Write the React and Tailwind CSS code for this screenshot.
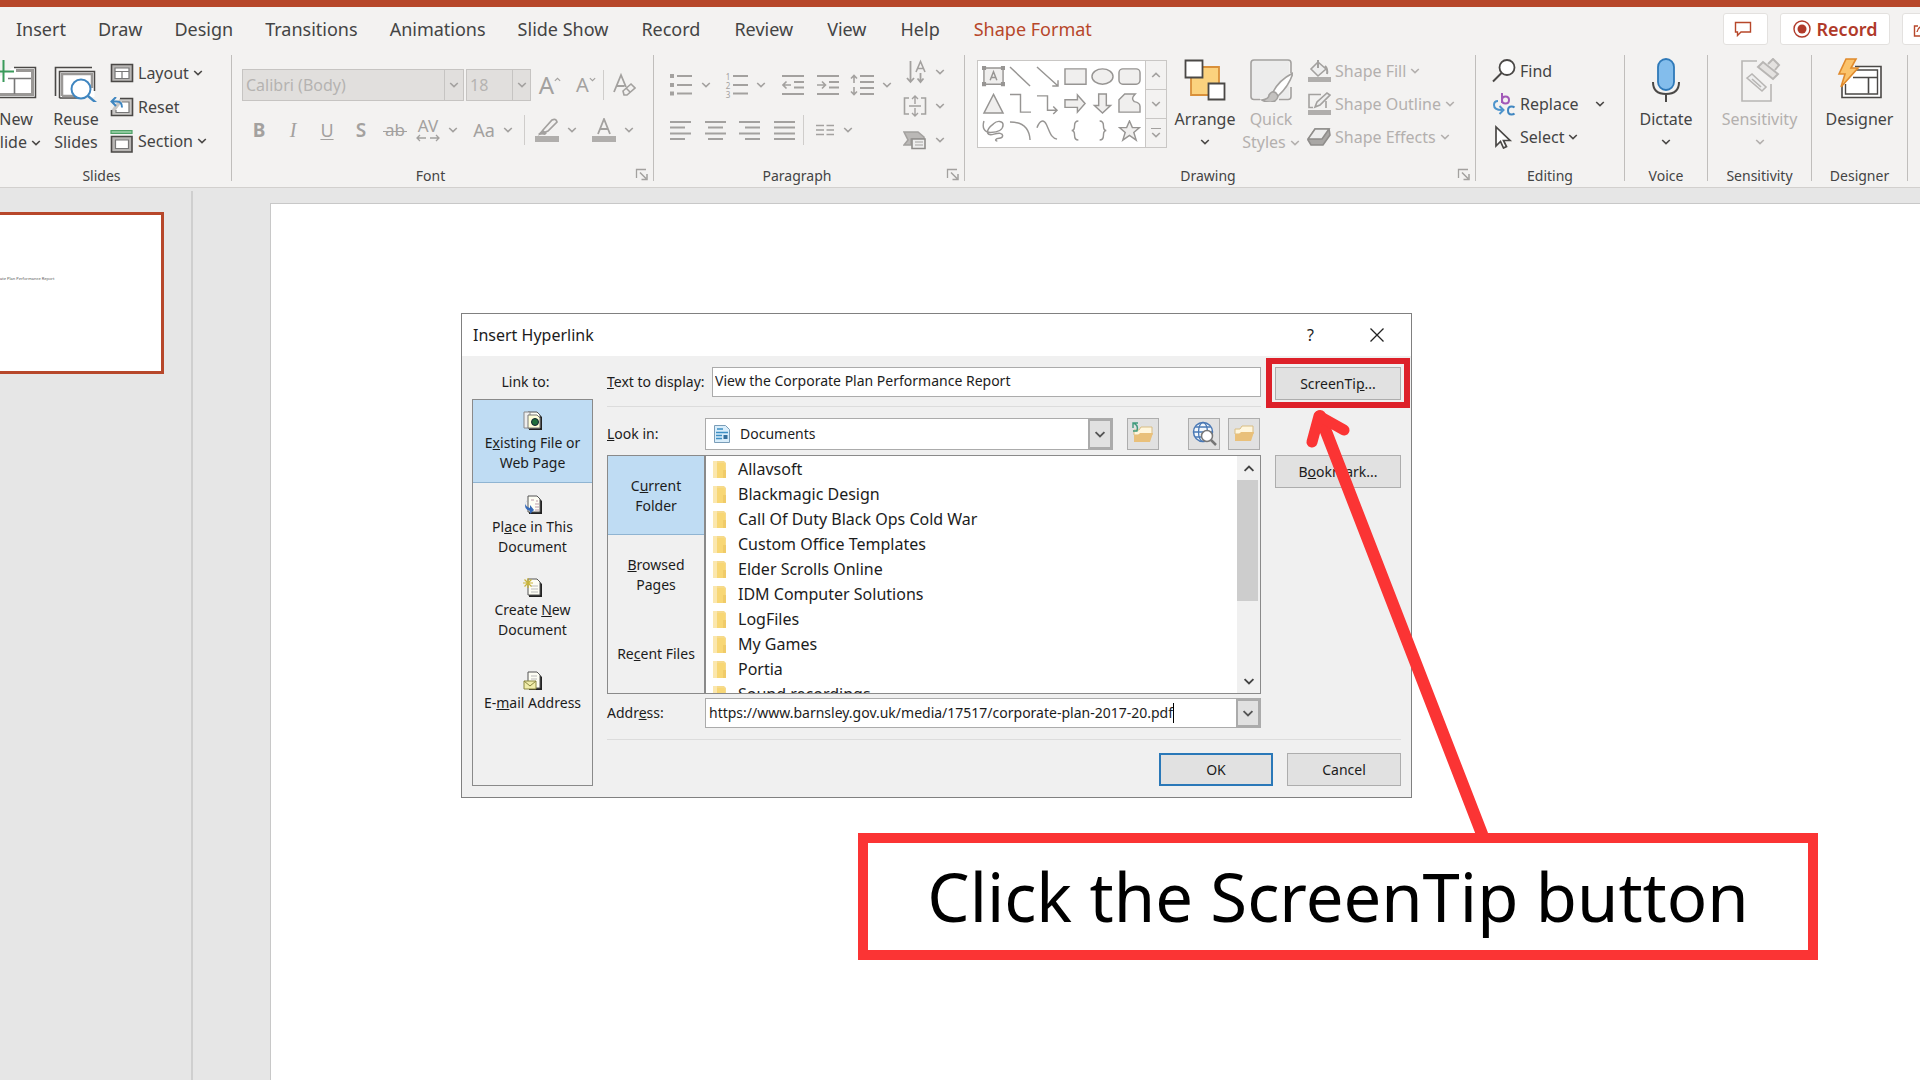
import React from "react";

const GREY = "#a3a19f";
const DARK = "#4a4846";

function Svg({ w, h, children, className = "" }) {
  return (
    <svg
      width={w}
      height={h}
      viewBox={`0 0 ${w} ${h}`}
      fill="none"
      strokeWidth="1.6"
      className={`shrink-0 ${className}`}
      aria-hidden="true"
    >
      {children}
    </svg>
  );
}

function Chevron({ color = DARK, w = 10, h = 6, className = "" }) {
  return (
    <svg width={w} height={h} viewBox="0 0 10 6" fill="none" className={`shrink-0 ${className}`} aria-hidden="true">
      <path d="M1.2 1 5 4.6 8.8 1" stroke={color} strokeWidth="1.6" />
    </svg>
  );
}

/* ---------- ribbon scaffolding ---------- */

function Launcher() {
  return (
    <button type="button" aria-label="More options" className="absolute right-1 bottom-0">
      <Svg w={14} h={14}>
        <path d="M1.5 11V2.5H11" stroke={GREY} strokeWidth="1.3" />
        <path d="M5 5.500 11 11.500M12 7v5.500H6.500" stroke={GREY} strokeWidth="1.5" />
      </Svg>
    </button>
  );
}

function Group({ label, width, launcher, children }) {
  return (
    <section className={`relative flex h-[126px] shrink-0 flex-col border-r border-[#c0bebc] ${width}`}>
      <div className="flex flex-1 items-start pt-px">{children}</div>
      <div className={`h-4 text-center text-[14px] leading-[22px] text-[#444] ${launcher ? "pr-6" : ""}`}>{label}</div>
      {launcher && <Launcher />}
    </section>
  );
}

function BigButton({ icon, lines, chevron, className = "", disabled }) {
  const color = disabled ? "#b3b0ae" : DARK;
  return (
    <button
      type="button"
      disabled={disabled}
      className={`flex shrink-0 flex-col items-center text-[16px] leading-[23px] ${
        disabled ? "text-[#b3b0ae]" : "text-[#444]"
      } ${className}`}
    >
      <span className="mb-1 flex h-12 items-center justify-center">{icon}</span>
      {lines.map((line, i) => (
        <span key={line} className="flex items-center gap-1 whitespace-nowrap">
          {line}
          {chevron === "inline" && i === lines.length - 1 && <Chevron color={color} />}
        </span>
      ))}
      {chevron === "below" && <Chevron color={color} className="mt-2" />}
    </button>
  );
}

function SmallButton({ icon, label, chevron, gap = "gap-1", disabled, className = "" }) {
  const color = disabled ? "#b3b0ae" : DARK;
  return (
    <button
      type="button"
      disabled={disabled}
      className={`flex items-center whitespace-nowrap text-[16px] ${
        disabled ? "text-[#b3b0ae]" : "text-[#444]"
      } ${className}`}
    >
      <span className="mr-1 flex w-6 justify-center">{icon}</span>
      <span className={`flex items-center ${gap}`}>
        {label}
        {chevron && <Chevron color={color} />}
      </span>
    </button>
  );
}

function Tool({ label, width, chevron, children }) {
  return (
    <button
      type="button"
      disabled
      aria-label={label}
      className={`flex h-8 shrink-0 items-center justify-center gap-2 text-[#a3a19f] ${width}`}
    >
      {children}
      {chevron && <Chevron color={GREY} />}
    </button>
  );
}

/* ---------- icons ---------- */

const IconNewSlide = () => (
  <Svg w={44} h={44}>
    <path d="M18 10h24v29H4V20" fill="#fff" />
    <path d="M20 9.500h21.500v30H4V20" stroke={DARK} strokeWidth="1.5" />
    <path d="M22 12.500h16.500v24H6" stroke="#9a9896" strokeWidth="3" />
    <path d="M14 20.500h23M20.500 21v15" stroke="#777" />
    <path d="M9.500 2v22M0 13.500h20" stroke="#3a9a5b" strokeWidth="2" />
  </Svg>
);
const IconReuse = () => (
  <Svg w={44} h={44}>
    <path d="M6.500 14h34v25h-34z" fill="#fff" />
    <path d="M1.500 38V9.500H38" stroke={DARK} />
    <path d="M5.500 40V13.500h35V33M5.500 40H24" stroke={DARK} strokeWidth="1.5" />
    <path d="M8 38V16h30v14M8 38h12" stroke="#9a9896" strokeWidth="2.500" />
    <circle cx="27" cy="31" r="9.500" fill="#fff" stroke="#3f86c0" strokeWidth="2" />
    <path d="m34 38 9.500 8" stroke="#3f86c0" strokeWidth="2.400" />
  </Svg>
);
const IconLayout = () => (
  <Svg w={24} h={20}>
    <path d="M1.500 1.500h21v17h-21z" fill="#b8b6b4" stroke={DARK} />
    <path d="M5 5h14v10.500H5z" fill="#fff" stroke="#777" strokeWidth="1.200" />
    <path d="M5 8.500h14M12 8.500v7" stroke="#777" strokeWidth="1.200" />
  </Svg>
);
const IconReset = () => (
  <Svg w={24} h={20}>
    <path d="M10 1.500h12.500v17h-21V13" fill="#c9c7c5" stroke={DARK} />
    <path d="M12 5h7v10.500H6V13" fill="#fff" stroke="#777" strokeWidth="1.200" />
    <path d="M6 0 1.500 4.500 6 9M2 4.500h5q5 0 5 6" stroke="#3f86c0" strokeWidth="2" />
  </Svg>
);
const IconSection = () => (
  <Svg w={24} h={24}>
    <path d="M1 1.500h21v3H1z" fill="#8cc79b" stroke="#4fa167" strokeWidth="1.200" />
    <path d="M1.500 7.500h20.500v15.500H1.500z" fill="#b8b6b4" stroke={DARK} />
    <path d="M5.500 11h13v8.500h-13z" fill="#fff" stroke="#777" strokeWidth="1.200" />
  </Svg>
);
const IconBullets = () => (
  <Svg w={24} h={24} className="shrink-0">
    <path d="M1 3h4M1 12h4M1 20.500h4" stroke={GREY} strokeWidth="4" />
    <path d="M8 3h15M8 12h15M8 20.500h15" stroke={GREY} strokeWidth="1.800" />
  </Svg>
);
const IconNumbers = () => (
  <span className="flex items-center gap-[3px]">
    <span className="flex flex-col text-[8px] leading-[9px]">
      <span>1</span>
      <span>2</span>
      <span>3</span>
    </span>
    <Svg w={15} h={24}>
      <path d="M0 3h15M0 12h15M0 20.500h15" stroke={GREY} strokeWidth="1.800" />
    </Svg>
  </span>
);
const IconIndent = ({ right }) => (
  <Svg w={22} h={22}>
    <path d="M0 2h22M12 8h10M12 13.500h10M0 20h22" stroke={GREY} strokeWidth="1.800" />
    {right ? (
      <path d="M0 11h8M5 7.500 8.500 11 5 14.500" stroke={GREY} />
    ) : (
      <path d="M9 11H1M4.500 7.500 1 11l3.500 3.500" stroke={GREY} />
    )}
  </Svg>
);
const IconSpacing = () => (
  <Svg w={24} h={22}>
    <path d="M10 2h14M10 8h14M10 14h14M10 20h14" stroke={GREY} strokeWidth="1.800" />
    <path d="M4 9V1.500M1 4.500l3-3 3 3M4 13v7.500M1 17.500l3 3 3-3" stroke={GREY} />
  </Svg>
);
const alignRows = {
  left: ["M0 2h21", "M0 7.500h15", "M0 13.500h21", "M0 19h15"],
  center: ["M0 2h21", "M3 7.500h15", "M0 13.500h21", "M3 19h15"],
  right: ["M0 2h21", "M6 7.500h15", "M0 13.500h21", "M6 19h15"],
  justify: ["M0 2h21", "M0 7.500h21", "M0 13.500h21", "M0 19h21"],
};
const IconAlign = ({ kind }) => (
  <Svg w={21} h={21}>
    <path d={alignRows[kind].join("")} stroke={GREY} strokeWidth="1.800" />
  </Svg>
);
const IconColumns = () => (
  <Svg w={20} h={12}>
    <path d="M1 1.500h8M1 6h8M1 10.500h8M11.500 1.500h7.500M11.500 6h7.500M11.500 10.500h7.500" stroke={GREY} strokeWidth="1.500" />
  </Svg>
);
const IconTextDirection = () => (
  <Svg w={24} h={26}>
    <path d="M7.500 2v21M4 19l3.500 4 3.500-4M17.500 14v9M14.500 19.500l3 3.500 3-3.500" stroke={GREY} strokeWidth="1.800" />
    <path d="M13 13 17.500 2.500 22 13M14.800 9.500h5.400" stroke={GREY} />
  </Svg>
);
const IconAlignText = () => (
  <Svg w={24} h={22}>
    <path d="M6 3H1.500v16H6M18 3h4.500v16H18" stroke={GREY} />
    <path d="M6 11h12M12 1v8M9 4l3-3 3 3M12 13v8M9 18l3 3 3-3" stroke={GREY} strokeWidth="1.400" />
  </Svg>
);
const IconSmartArt = () => (
  <Svg w={24} h={20}>
    <path d="M1 2h14l6 5v2H8v6H1l4-5z" fill="#bab8b6" stroke={GREY} />
    <path d="M9 9h13v9.500H9z" fill="#eee" stroke="#8f8d8b" />
    <path d="M12 12h8M12 15h8" stroke={GREY} strokeWidth="1.200" />
  </Svg>
);
const IconArrange = () => (
  <Svg w={42} h={42}>
    <path d="M7 8h28v28H7z" fill="#fbd27e" stroke="#d9903a" strokeWidth="1.800" />
    <path d="M1.500 1.500h17v17h-17zM24.500 24.500h16v16h-16z" fill="#fff" stroke={DARK} strokeWidth="1.800" />
  </Svg>
);
const IconQuickStyles = () => (
  <Svg w={44} h={44}>
    <path d="M3 3h37v37H3z" fill="#ececec" />
    <path d="M11 41.500H5q-3 0-3-3V5q0-3 3-3h34q3 0 3 3v10M42 29v9.500q0 3-3 3h-9" stroke={GREY} />
    <path d="M24 34q6-12 20-19-4 13-15 23z" fill="#fff" stroke={GREY} />
    <path d="M13 42q7-1 7-5 3-5 7-2 4 4-1 8-6 3-13-1z" fill="#c4c2c0" stroke={GREY} />
  </Svg>
);
const IconFill = () => (
  <Svg w={24} h={24}>
    <path d="m11 3 8 7-8 7-7-7z" fill="#eee" stroke={GREY} />
    <path d="M11 1v8M18 7q3 3 2 8" stroke={GREY} strokeWidth="2" />
    <path d="M1 18h23v5H1z" fill="#b0aeac" />
  </Svg>
);
const IconOutline = () => (
  <Svg w={24} h={24}>
    <path d="M14 2.500H2v13h4M19 9v7" stroke={GREY} />
    <path d="m8 15 2-5L20 1l3 2-10 10z" fill="#eee" stroke={GREY} />
    <path d="M1 18h23v5H1z" fill="#b0aeac" />
  </Svg>
);
const IconEffects = () => (
  <Svg w={24} h={20}>
    <path d="M8 2h14l1 6-7 10H4l-3-5z" fill="#a9a7a5" stroke="#8f8d8b" />
    <path d="M8 2h14l-7 10H1z" fill="#eee" stroke="#8f8d8b" />
  </Svg>
);
const IconFind = () => (
  <Svg w={24} h={24}>
    <circle cx="15" cy="8.500" r="7.500" fill="#fff" stroke={DARK} strokeWidth="1.800" />
    <path d="M9.500 14 1 22.500" stroke={DARK} strokeWidth="2" />
  </Svg>
);
const IconReplace = () => (
  <Svg w={24} h={24}>
    <path d="M10 1v10M10 8q0-3.500 3.500-3.500T17 8t-3.500 3.500T10 8" stroke="#a259b8" strokeWidth="2" />
    <path d="M22.500 15.500q-1-1-3-1-3.500 0-3.500 4t3.500 4q2 0 3-1" stroke="#3f86c0" strokeWidth="2" />
    <path d="M6 9Q2 9 2 13q0 5 8 5M7.500 14l4 4-4 4" stroke="#4d94cc" strokeWidth="2" />
  </Svg>
);
const IconSelect = () => (
  <Svg w={24} h={24}>
    <path d="M4 2v19l4.500-4.500 3 6.500 3-1.500-3-6H18z" fill="#fff" stroke={DARK} strokeWidth="1.700" />
  </Svg>
);
const IconMic = () => (
  <Svg w={30} h={46}>
    <rect x="7" y="2" width="16" height="31" rx="8" fill="#83bdec" stroke="#2f79b8" strokeWidth="1.800" />
    <path d="M2 25q0 12 13 12t13-12M15 37v8" stroke={DARK} strokeWidth="2" />
  </Svg>
);
const IconSensitivity = () => (
  <Svg w={42} h={44}>
    <path d="M18 3H3v40h29V26" stroke="#b8b6b4" />
    <path d="m8 20 5-4 14 13-4 4z" fill="#eee" stroke="#b8b6b4" />
    <path d="m13 21 9 8" stroke="#b8b6b4" />
    <path d="m19 9 5-5 15 12-5 5zM29 6l5-5 6 6-4 5" fill="#e4e2e0" stroke="#b8b6b4" strokeWidth="2" />
  </Svg>
);
const IconDesigner = () => (
  <Svg w={46} h={44}>
    <path d="M18 8.500h26v31H5V26" fill="#fff" stroke={DARK} />
    <path d="M18 12h22.500v24H8.500V26" stroke={DARK} strokeWidth="1.400" />
    <path d="M16 19.500h24M31.500 20v15.500" stroke={DARK} />
    <path d="M9 1h10l-5 9h7L4 29l4-13H2z" fill="#fbc36b" stroke="#e08a2c" strokeWidth="1.600" />
  </Svg>
);

/* ---------- shape gallery ---------- */

const shapes = [
  <path key="t" d="M2 2h20v17H2zM8.500 15 12 6l3.500 9M9.700 12h4.600M.5.500h3v3h-3zM20.500.500h3v3h-3zM.5 17.500h3v3h-3zM20.500 17.500h3v3h-3z" fill="#f0efee" />,
  <path key="l" d="m1 1 21 20" />,
  <path key="a" d="m1 1 22 20M23 15v6h-6" />,
  <path key="r" d="M1 3h22v16H1z" fill="#f0efee" />,
  <ellipse key="e" cx="12" cy="11" rx="11" ry="8" fill="#f0efee" />,
  <rect key="rr" x="1" y="3" width="22" height="16" rx="4" fill="#f0efee" />,
  <path key="tri" d="M12 1.500 22 21H2z" fill="#f0efee" />,
  <path key="el" d="M1 1.500h11V20h11" />,
  <path key="ea" d="M1 3h11v15h10M18 14l4 4-4 4" />,
  <path key="ar" d="M1 7h13V2l8 9-8 9v-5H1z" fill="#f0efee" />,
  <path key="ad" d="M8 1h8v12h4.500L12 21 3.500 13H8z" fill="#f0efee" />,
  <path key="ff" d="M1 20V7l6-6h11q-5 5-1 8 6 1 6 5v6z" fill="#f0efee" />,
  <path key="sc" d="M2 1C0 8 2 13 9 13c8 0 13-3 13-8 0-4-6-5-10-1-4 3-7 7-6 10 2 4 8-1 13 0 4 1 3 5-1 5s-5 3-2 3" />,
  <path key="cv" d="M1 2q20 0 21 19" />,
  <path key="wv" d="M1 8C4 0 8-1 11 5c4 9 5 14 11 15" />,
  <path key="lb" d="M15 1q-4 0-4 5 0 5-3 5 3 0 3 5 0 5 4 5" />,
  <path key="rb" d="M9 1q4 0 4 5 0 5 3 5-3 0-3 5 0 5-4 5" />,
  <path key="st" d="m12 1 3 7h7.500l-6 5 2.500 8-7-5-7 5 2.500-8-6-5H9z" fill="#f0efee" />,
];

function Gallery() {
  return (
    <div className="mt-1 ml-3 flex h-[88px] w-[190px] shrink-0 border border-[#c9c7c5] bg-white">
      <div className="grid flex-1 grid-cols-6 grid-rows-3 place-items-center p-[2px]">
        {shapes.map((shape, i) => (
          <svg key={i} width="23" height="22" viewBox="0 0 24 23" fill="none" stroke="#979593" strokeWidth="1.500">
            {shape}
          </svg>
        ))}
      </div>
      <div className="flex w-[21px] flex-col divide-y divide-[#c9c7c5] border-l border-[#c9c7c5] bg-[#f3f2f1]">
        <button type="button" aria-label="Scroll up" className="flex flex-1 items-center justify-center">
          <Chevron color={GREY} className="rotate-180" />
        </button>
        <button type="button" aria-label="Scroll down" className="flex flex-1 items-center justify-center">
          <Chevron color={GREY} />
        </button>
        <button type="button" aria-label="More shapes" className="flex flex-1 flex-col items-center justify-center gap-[3px]">
          <span className="h-px w-[10px] bg-[#a3a19f]" />
          <Chevron color={GREY} />
        </button>
      </div>
    </div>
  );
}

/* ---------- ribbon ---------- */

const mainTabs = ["Insert", "Draw", "Design", "Transitions", "Animations", "Slide Show"];
const moreTabs = ["Record", "Review", "View", "Help"];

function TabRow() {
  return (
    <nav className="flex h-12 items-start justify-between">
      <div className="flex pt-2 text-[18px] leading-[28px] text-[#444]">
        {mainTabs.map((t) => (
          <button key={t} type="button" className="px-4 whitespace-nowrap">
            {t}
          </button>
        ))}
        {moreTabs.map((t) => (
          <button key={t} type="button" className="px-[17px] whitespace-nowrap">
            {t}
          </button>
        ))}
        <button type="button" className="px-[17px] whitespace-nowrap text-[#b7472a]">
          Shape Format
        </button>
      </div>
      <div className="-mr-6 flex shrink-0 gap-3 pt-[6px]">
        <button type="button" aria-label="Comments" className="flex h-8 w-[45px] items-center justify-center rounded-[3px] border border-[#e3e1df] bg-white pr-[6px]">
          <Svg w={18} h={16}>
            <path d="M1.500 1.500h15v9.500H7L3.500 14.500V11h-2z" stroke="#b7472a" strokeWidth="1.400" />
          </Svg>
        </button>
        <button type="button" className="flex h-8 w-[110px] items-center justify-center gap-[6px] rounded-[3px] border border-[#e3e1df] bg-white text-[18px] font-semibold text-[#b03a2a]">
          <Svg w={18} h={18}>
            <circle cx="9" cy="9" r="8" stroke="#b03a2a" strokeWidth="1.400" />
            <circle cx="9" cy="9" r="4.500" fill="#b03a2a" />
          </Svg>
          Record
        </button>
        <button type="button" aria-label="Share" className="flex h-8 w-[42px] items-center rounded-[3px] border border-[#e3e1df] bg-white pl-[10px]">
          <Svg w={18} h={16}>
            <path d="M5 5H1.500v10h13v-4M4 11q1-6 8-6M9 1l5 4-5 4" stroke="#b7472a" strokeWidth="1.400" />
          </Svg>
        </button>
      </div>
    </nav>
  );
}

function RibbonSelect({ label, value, width, caretWidth }) {
  return (
    <div className={`flex h-8 shrink-0 border border-[#c6c4c2] bg-[#e1dfdd] ${width}`}>
      <select aria-label={label} disabled className="min-w-0 flex-1 appearance-none pl-[3px] text-[16px] text-[#b5b3b1] opacity-100">
        <option>{value}</option>
      </select>
      <span className={`flex items-center justify-center border-l border-[#c6c4c2] ${caretWidth}`}>
        <Chevron color={GREY} />
      </span>
    </div>
  );
}

const Rule = () => <span className="h-[30px] w-px shrink-0 bg-[#cfcdcb]" />;

function FontGroup() {
  return (
    <Group label="Font" width="w-[422px]" launcher>
      <div className="flex flex-col gap-[13px] pt-[13px] pl-[10px]">
        <div className="flex items-center">
          <RibbonSelect label="Font" value="Calibri (Body)" width="w-[222px]" caretWidth="w-[19px]" />
          <span className="w-[2px]" />
          <RibbonSelect label="Font size" value="18" width="w-[65px]" caretWidth="w-[18px]" />
          <Tool label="Increase font size" width="w-[38px]">
            <span className="flex items-start text-[24px] leading-6">
              A<Chevron color={GREY} w={7} h={5} className="mt-1 rotate-180" />
            </span>
          </Tool>
          <Tool label="Decrease font size" width="w-[34px]">
            <span className="flex items-start text-[20px] leading-6">
              A<Chevron color={GREY} w={7} h={5} className="mt-1" />
            </span>
          </Tool>
          <Rule />
          <Tool label="Clear formatting" width="w-[40px]">
            <Svg w={24} h={26}>
              <path d="M2 20 9 3l5 12M4.500 14h8" stroke={GREY} strokeWidth="1.800" />
              <path d="m11 19 8-7 4 4-8 7h-3z" fill="#f3f2f1" stroke={GREY} />
              <path d="m14 16 4 4" stroke={GREY} />
            </Svg>
          </Tool>
        </div>
        <div className="flex items-center">
          <Tool label="Bold" width="w-[34px]"><span className="text-[19px] font-bold">B</span></Tool>
          <Tool label="Italic" width="w-[34px]"><span className="font-['Liberation_Serif'] text-[20px] italic">I</span></Tool>
          <Tool label="Underline" width="w-[34px]"><span className="text-[18px] underline underline-offset-2">U</span></Tool>
          <Tool label="Shadow" width="w-[34px]"><span className="text-[19px] font-semibold">S</span></Tool>
          <Tool label="Strikethrough" width="w-[34px]">
            <span className="relative px-[2px] text-[17px] after:absolute after:inset-x-0 after:top-[14px] after:h-px after:bg-[#a3a19f]">ab</span>
          </Tool>
          <Tool label="Character spacing" width="w-[50px]" chevron>
            <span className="flex flex-col items-center text-[17px] leading-4">
              AV
              <Svg w={24} h={8}>
                <path d="M1 4h9M4 1 1 4l3 3M14 4h9M20 1l3 3-3 3" stroke={GREY} strokeWidth="1.300" />
              </Svg>
            </span>
          </Tool>
          <Tool label="Change case" width="w-[62px]" chevron><span className="text-[18px]">Aa</span></Tool>
          <Rule />
          <Tool label="Highlight color" width="w-[62px]" chevron>
            <Svg w={24} h={24}>
              <path d="m8 12 9-10q4-2 5 2l-9 9-5 2-3 1z" fill="#f3f2f1" stroke={GREY} strokeWidth="1.700" />
              <path d="m3 16 5-4 4 3-2 2z" fill={GREY} />
              <path d="M0 18h24v6H0z" fill="#b0aeac" />
            </Svg>
          </Tool>
          <Tool label="Font color" width="w-[52px]" chevron>
            <Svg w={24} h={24}>
              <path d="M6 16 12 1l6 15M8.500 11h7" stroke={GREY} strokeWidth="1.800" />
              <path d="M0 18h24v6H0z" fill="#b0aeac" />
            </Svg>
          </Tool>
        </div>
      </div>
    </Group>
  );
}

function ParagraphGroup() {
  return (
    <Group label="Paragraph" width="w-[311px]" launcher>
      <div className="flex flex-col gap-[13px] pt-[13px] pl-[8px]">
        <div className="flex items-center">
          <Tool label="Bullets" width="w-[56px]" chevron><IconBullets /></Tool>
          <Tool label="Numbering" width="w-[56px]" chevron><IconNumbers /></Tool>
          <Tool label="Decrease indent" width="w-[38px]"><IconIndent /></Tool>
          <Tool label="Increase indent" width="w-[32px]"><IconIndent right /></Tool>
          <Tool label="Line spacing" width="w-[54px]" chevron><IconSpacing /></Tool>
        </div>
        <div className="flex items-center">
          <Tool label="Align left" width="w-[36px]"><IconAlign kind="left" /></Tool>
          <Tool label="Center" width="w-[34px]"><IconAlign kind="center" /></Tool>
          <Tool label="Align right" width="w-[34px]"><IconAlign kind="right" /></Tool>
          <Tool label="Justify" width="w-[37px]"><IconAlign kind="justify" /></Tool>
          <Rule />
          <Tool label="Columns" width="w-[60px]" chevron><IconColumns /></Tool>
        </div>
      </div>
      <div className="flex flex-col gap-[2px]">
        <Tool label="Text direction" width="w-[52px]" chevron><IconTextDirection /></Tool>
        <Tool label="Align text" width="w-[52px]" chevron><IconAlignText /></Tool>
        <Tool label="Convert to SmartArt" width="w-[52px]" chevron><IconSmartArt /></Tool>
      </div>
    </Group>
  );
}

function Ribbon() {
  return (
    <header className="shrink-0 border-b border-[#d2d0ce] bg-[#f3f2f1]">
      <div className="h-[7px] bg-[#b7472a]" />
      <TabRow />
      <div className="-ml-7 flex pb-[6px]">
        <Group label="Slides" width="w-[260px]">
          <BigButton icon={<IconNewSlide />} lines={["New", "Slide"]} chevron="inline" className="ml-[14px] w-[60px]" />
          <BigButton icon={<IconReuse />} lines={["Reuse", "Slides"]} className="w-[60px]" />
          <div className="flex flex-col">
            <SmallButton icon={<IconLayout />} label="Layout" chevron className="ml-1 h-[34px]" />
            <SmallButton icon={<IconReset />} label="Reset" className="ml-1 h-[34px]" />
            <SmallButton icon={<IconSection />} label="Section" chevron className="ml-1 h-[34px]" />
          </div>
        </Group>
        <FontGroup />
        <ParagraphGroup />
        <Group label="Drawing" width="w-[511px]" launcher>
          <Gallery />
          <BigButton icon={<IconArrange />} lines={["Arrange"]} chevron="below" className="w-[76px]" />
          <BigButton icon={<IconQuickStyles />} lines={["Quick", "Styles"]} chevron="inline" disabled className="w-[56px]" />
          <div className="-mt-[2px] ml-2 flex flex-col">
            <SmallButton icon={<IconFill />} label="Shape Fill" chevron disabled className="h-[33px]" />
            <SmallButton icon={<IconOutline />} label="Shape Outline" chevron disabled className="h-[33px]" />
            <SmallButton icon={<IconEffects />} label="Shape Effects" chevron disabled className="h-[33px]" />
          </div>
        </Group>
        <Group label="Editing" width="w-[149px]">
          <div className="-mt-[2px] ml-4 flex flex-col">
            <SmallButton icon={<IconFind />} label="Find" className="h-[33px]" />
            <SmallButton icon={<IconReplace />} label="Replace" chevron gap="gap-4" className="h-[33px]" />
            <SmallButton icon={<IconSelect />} label="Select" chevron className="h-[33px]" />
          </div>
        </Group>
        <Group label="Voice" width="w-[83px]">
          <BigButton icon={<IconMic />} lines={["Dictate"]} chevron="below" className="w-full" />
        </Group>
        <Group label="Sensitivity" width="w-[104px]">
          <BigButton icon={<IconSensitivity />} lines={["Sensitivity"]} chevron="below" disabled className="w-full" />
        </Group>
        <Group label="Designer" width="w-[96px]">
          <BigButton icon={<IconDesigner />} lines={["Designer"]} className="w-full" />
        </Group>
      </div>
    </header>
  );
}

/* ---------- dialog ---------- */

function Page({ children }) {
  return (
    <Svg w={20} h={20}>
      <path d="M6 2h9l4 4v13H6z" fill="#222" />
      <path d="M5 1h9l3 3v13H5z" fill="#fdfdf4" stroke="#555" strokeWidth="1" />
      {children}
    </Svg>
  );
}

const linkTargets = [
  {
    id: "existing",
    lines: [<>E<u>x</u>isting File or</>, "Web Page"],
    icon: (
      <Page>
        <path d="M1 1h6v16H1z" fill="#eee" stroke="#888" strokeWidth="1" />
        <path d="M5 4h9l3 3v10H5z" fill="#ffffd8" stroke="#777" strokeWidth="1" />
        <circle cx="12" cy="11" r="3.500" fill="#1f6e3a" stroke="#123" strokeWidth="1" />
      </Page>
    ),
  },
  {
    id: "place",
    lines: [<>Pl<u>a</u>ce in This</>, "Document"],
    icon: (
      <Page>
        <path d="M8 5h3M13 6h2M12 9h4M12 12h4M12 15h4" stroke="#b9a" strokeWidth="1" />
        <path d="M4 5q-4 6 3 8v-3l4 5-4 4v-3Q-1 14 4 5z" fill="#3569b8" />
      </Page>
    ),
  },
  {
    id: "create",
    lines: [<>Create <u>N</u>ew</>, "Document"],
    icon: (
      <Page>
        <path d="M8 8h7M8 11h7M8 14h7" stroke="#bbb" strokeWidth="1" />
        <path d="M5 0v10M0 5h10M1.500 1.500l7 7M8.500 1.500l-7 7" stroke="#c9b43a" strokeWidth="1.200" />
      </Page>
    ),
  },
  {
    id: "email",
    lines: [<>E-<u>m</u>ail Address</>],
    icon: (
      <Page>
        <path d="M8 5h6M8 8h6" stroke="#bbb" strokeWidth="1" />
        <path d="M1 10h12v8H1z" fill="#f1edaa" stroke="#8a8640" strokeWidth="1" />
        <path d="m1 10 6 5 6-5" stroke="#8a8640" strokeWidth="1" />
      </Page>
    ),
  },
];

const folders = [
  "Allavsoft",
  "Blackmagic Design",
  "Call Of Duty Black Ops Cold War",
  "Custom Office Templates",
  "Elder Scrolls Online",
  "IDM Computer Solutions",
  "LogFiles",
  "My Games",
  "Portia",
  "Sound recordings",
];

const FolderIcon = () => (
  <Svg w={16} h={20}>
    <path d="M1 1h11l2 2v15H1z" fill="#f6da8c" />
    <path d="M5 3h7l1 2v12l-2 1H5z" fill="#f8d775" />
    <path d="M11 10h3v8h-3z" fill="#f0cb69" />
    <path d="M1 1h4v17H1z" fill="#fbe7ae" />
  </Svg>
);

const OpenFolder = ({ x = 4, y = 7 }) => (
  <g transform={`translate(${x} ${y})`}>
    <path d="M1 4h5l2-3h11v8H1z" fill="#fff6dd" stroke="#d9bd83" strokeWidth="1" />
    <path d="M1 16V9h4l2-2h13l-3 9z" fill="#e9c07a" />
  </g>
);

function IconButton({ label, children }) {
  return (
    <button type="button" aria-label={label} className="flex size-8 items-center justify-center border border-[#adadad] bg-[#e1e1e1]">
      {children}
    </button>
  );
}

function PushButton({ children, className = "" }) {
  return (
    <button type="button" className={`h-[33px] border bg-[#e1e1e1] ${className}`}>
      {children}
    </button>
  );
}

const places = [
  { id: "current", body: <>C<u>u</u>rrent<br />Folder</>, on: true },
  { id: "browsed", body: <><u>B</u>rowsed<br />Pages</> },
  { id: "recent", body: <>Re<u>c</u>ent Files</> },
];

function HyperlinkDialog() {
  return (
    <div
      role="dialog"
      aria-label="Insert Hyperlink"
      className="relative w-[951px] border border-[#808080] bg-[#f0f0f0] text-[14px] leading-[20px] text-[#1c1c1c]"
    >
      <div className="flex h-[42px] items-center bg-white pl-[11px] text-[16px]">
        <h2 className="flex-1">Insert Hyperlink</h2>
        <button type="button" aria-label="Help" className="w-[65px] text-center text-[16px]">
          ?
        </button>
        <button type="button" aria-label="Close" className="flex w-[68px] justify-center">
          <Svg w={16} h={16}>
            <path d="m1.500 1.500 13 13M14.500 1.500l-13 13" stroke="#222" strokeWidth="1.300" />
          </Svg>
        </button>
      </div>

      <div className="flex pt-[11px] pb-[11px] pl-[10px]">
        <div className="flex w-[121px] shrink-0 flex-col">
          <span className="h-8 pt-[5px] pr-[14px] text-center">Link to:</span>
          <div className="flex flex-1 flex-col border border-[#8a8a8a]">
            {linkTargets.map((t, i) => (
              <button
                key={t.id}
                type="button"
                className={`flex h-[83px] flex-col items-center justify-center pt-[2px] ${
                  i === 0 ? "border-b border-[#8fb4d2] bg-[#bfdcf3]" : ""
                }`}
              >
                <span className="mb-[2px]">{t.icon}</span>
                {t.lines.map((line, j) => (
                  <span key={j}>{line}</span>
                ))}
              </button>
            ))}
          </div>
        </div>

        <div className="ml-[14px] flex-1 pr-[10px]">
          <div className="flex">
            <div className="flex w-[654px] shrink-0 flex-col">
              <div className="flex h-[30px] items-center">
                <label htmlFor="display-text" className="w-[105px] whitespace-nowrap">
                  <u>T</u>ext to display:
                </label>
                <input
                  id="display-text"
                  defaultValue="View the Corporate Plan Performance Report"
                  className="h-[30px] flex-1 border border-[#ababab] bg-white pb-1 pl-[2px]"
                />
              </div>
              <hr className="mt-[9px] mb-[11px] border-[#dcdcdc]" />
              <div className="flex items-center">
                <label htmlFor="look-in" className="w-[98px]">
                  <u>L</u>ook in:
                </label>
                <div className="flex h-8 w-[408px] items-stretch border border-[#ababab] bg-white">
                  <span className="flex w-8 items-center justify-center">
                    <Svg w={18} h={20}>
                      <path d="M1.500 1.500h11l4 4v13h-15z" fill="#d9edfa" stroke="#7a9db8" strokeWidth="1" />
                      <path d="M4 5h6M3 8.500h12M3 11.500h6M3 14.500h6" stroke="#3d8fc4" strokeWidth="1.500" />
                      <path d="M10.500 11h4v4h-4z" fill="#356f9c" />
                    </Svg>
                  </span>
                  <select id="look-in" className="flex-1 appearance-none pl-[2px]">
                    <option>Documents</option>
                  </select>
                  <span className="flex w-6 items-center justify-center border-2 border-[#ababab] bg-[#e1e1e1]">
                    <Chevron color="#555" w={12} h={7} />
                  </span>
                </div>
                <div className="ml-[14px]">
                  <IconButton label="Up one folder">
                    <Svg w={28} h={28}>
                      <OpenFolder x={4} y={6} />
                      <path d="M4 8V3h5M4 3q6 2 4 8H4" stroke="#3f9a7c" strokeWidth="1.400" />
                    </Svg>
                  </IconButton>
                </div>
                <div className="mr-px ml-auto flex gap-2">
                  <IconButton label="Browse the Web">
                    <Svg w={28} h={28}>
                      <circle cx="13" cy="12" r="9.500" fill="#f3f8fd" stroke="#4a79b5" strokeWidth="1.500" />
                      <ellipse cx="13" cy="12" rx="4.500" ry="9.500" stroke="#4a79b5" strokeWidth="1.300" />
                      <path d="M4 12h18M5.500 7h15M5.500 17h15" stroke="#4a79b5" strokeWidth="1.300" />
                      <circle cx="17" cy="16" r="5.500" fill="#fff" stroke="#777" strokeWidth="1.500" />
                      <path d="m21 20 5 5" stroke="#777" strokeWidth="2.500" />
                    </Svg>
                  </IconButton>
                  <IconButton label="Browse for File">
                    <Svg w={28} h={28}>
                      <OpenFolder x={4} y={5} />
                    </Svg>
                  </IconButton>
                </div>
              </div>

              <div className="mt-[5px] flex h-[239px] border border-[#8a8a8a]">
                <div className="grid w-[98px] grid-rows-3 border-r-2 border-[#8a8a8a]">
                  {places.map((p) => (
                    <button key={p.id} type="button" className={p.on ? "border-b border-[#8fb4d2] bg-[#bfdcf3] pt-[2px]" : ""}>
                      {p.body}
                    </button>
                  ))}
                </div>
                <ul className="flex-1 overflow-hidden bg-white pt-px text-[16px] leading-[25px]">
                  {folders.map((f) => (
                    <li key={f} className="flex h-[25px] items-center gap-[10px] pl-[6px]">
                      <FolderIcon />
                      {f}
                    </li>
                  ))}
                </ul>
                <div className="flex w-[23px] flex-col bg-[#f0f0f0]">
                  <button type="button" aria-label="Scroll list up" className="flex h-6 items-center justify-center">
                    <Chevron color="#444" w={12} h={7} className="rotate-180" />
                  </button>
                  <span className="mr-[2px] h-[121px] bg-[#cdcdcd]" />
                  <button type="button" aria-label="Scroll list down" className="mt-auto flex h-6 items-center justify-center">
                    <Chevron color="#444" w={12} h={7} />
                  </button>
                </div>
              </div>

              <div className="mt-1 flex items-center">
                <label htmlFor="address" className="w-[98px]">
                  Addr<u>e</u>ss:
                </label>
                <div className="flex h-[30px] flex-1 items-stretch border border-[#ababab] bg-white">
                  <div className="flex flex-1 items-center overflow-hidden">
                    <input
                      id="address"
                      defaultValue="https://www.barnsley.gov.uk/media/17517/corporate-plan-2017-20.pdf"
                      className="field-sizing-content pl-[3px]"
                    />
                    <span className="h-5 w-px bg-black" />
                  </div>
                  <button type="button" aria-label="Show addresses" className="flex w-6 items-center justify-center border-2 border-[#ababab] bg-[#e1e1e1]">
                    <Chevron color="#555" w={12} h={7} />
                  </button>
                </div>
              </div>
            </div>

            <div className="ml-[14px] flex flex-1 flex-col gap-[55px]">
              <div className="relative">
                <PushButton className="w-full border-[#adadad]">
                  ScreenTi<u>p</u>...
                </PushButton>
                <div className="pointer-events-none absolute -inset-x-[9px] -top-[9px] -bottom-2 border-[6px] border-[#dd2029]" />
              </div>
              <PushButton className="border-[#adadad]">
                B<u>o</u>okmark...
              </PushButton>
            </div>
          </div>

          <hr className="mt-[11px] border-[#dcdcdc]" />
          <div className="mt-[13px] flex justify-end gap-[14px]">
            <PushButton className="w-[114px] border-2 border-[#2a78b8]">OK</PushButton>
            <PushButton className="w-[114px] border-[#adadad]">Cancel</PushButton>
          </div>
        </div>
      </div>

      <svg
        className="pointer-events-none absolute top-[90px] left-[838px]"
        width="200"
        height="436"
        viewBox="0 0 200 436"
        fill="none"
        stroke="#fb3434"
        strokeLinecap="round"
        strokeLinejoin="round"
        aria-hidden="true"
      >
        <path d="M20 12 182 430" strokeWidth="12" />
        <path d="M12 38 19 12l25 14" strokeWidth="11" />
      </svg>
    </div>
  );
}

/* ---------- workspace ---------- */

export default function App() {
  return (
    <div className="flex h-screen flex-col overflow-hidden bg-[#e6e6e6] font-['Noto_Sans','Open_Sans',sans-serif]">
      <Ribbon />
      <main className="flex min-h-0 flex-1">
        <aside className="mt-[3px] w-[193px] shrink-0 overflow-hidden border-r-2 border-[#cfcfcf]">
          <div className="mt-[21px] -ml-[121px] flex h-[162px] w-[285px] items-start border-[3px] border-[#b7472a] bg-white pt-[60px] pl-[88px] text-[4px] leading-[8px] whitespace-nowrap text-[#555]">
            View the Corporate Plan Performance Report
          </div>
        </aside>
        <div className="mt-[15px] ml-[77px] flex flex-1 flex-col items-start border-t border-l border-[#c8c8c8] bg-white pt-[109px] pl-[190px]">
          <HyperlinkDialog />
          <p className="relative mt-[35px] ml-[397px] flex h-[127px] w-[960px] items-center justify-center border-[10px] border-[#fb3434] bg-white text-[67px] whitespace-nowrap text-black">
            Click the ScreenTip button
          </p>
        </div>
      </main>
    </div>
  );
}
